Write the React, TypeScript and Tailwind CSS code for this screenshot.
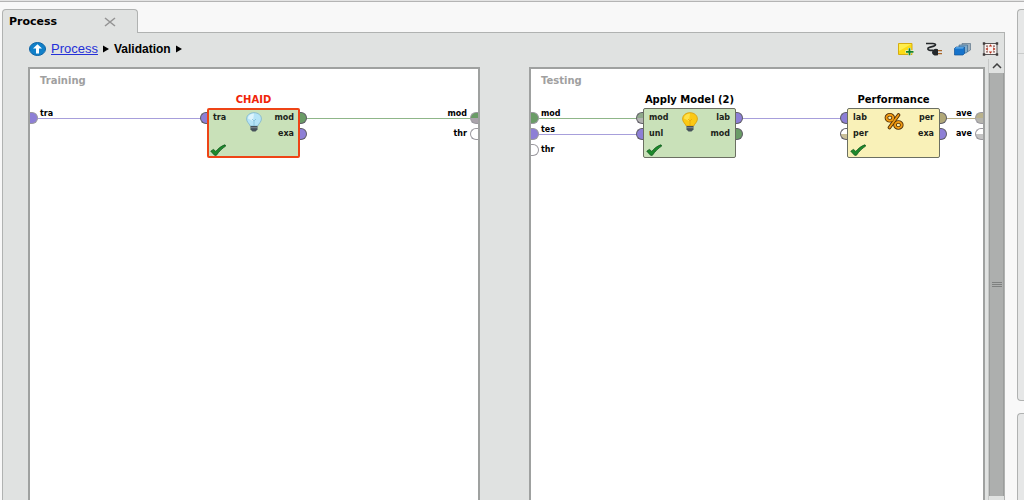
import { clsx } from "clsx";

type Side = "left" | "right";

interface PortData {
  label: string;
  color: string;
  wired?: boolean;
}

const colors = {
  violet: "bg-[#8d7fd6]",
  green: "bg-[#6a9c66]",
  tan: "bg-[#b1a878]",
  empty: "bg-white",
  greenGray: "bg-linear-to-b from-[#6a9c66] from-50% to-[#aaa3ab] to-50%",
  grayGreen: "bg-linear-to-b from-[#8fa98b] from-50% to-[#b3b3b3] to-50%",
  whiteTan: "bg-linear-to-b from-white from-50% to-[#c9bf98] to-50%",
  tanGray: "bg-linear-to-b from-[#b9b28c] from-50% to-[#b5b4ae] to-50%",
  whiteGray: "bg-linear-to-b from-white from-50% to-[#c4c4c4] to-50%",
};

const rows = ["top-[43px]", "top-[59px]", "top-[75px]"];
const nodeRows = ["top-1", "top-5"];

function Port({ bulge, color, className }: { bulge: Side; color: string; className: string }) {
  return (
    <span
      className={clsx(
        "absolute h-3 w-2 border",
        bulge === "left" ? "rounded-l-full border-r-0" : "rounded-r-full border-l-0",
        color,
        className
      )}
    />
  );
}

function Wire({ className }: { className: string }) {
  return <span className={clsx("absolute h-px", className)} />;
}

function EdgePorts({ side, ports }: { side: Side; ports: PortData[] }) {
  return (
    <>
      {ports.map((port, i) => (
        <div
          key={i}
          className={clsx(
            "absolute flex h-3 items-center text-[8px] leading-3 font-bold",
            side === "left" ? "left-0 pl-[10px]" : "right-0 pr-[11px]",
            rows[i]
          )}
        >
          <Port
            bulge={side === "left" ? "right" : "left"}
            color={port.color}
            className={clsx("border-[#9a989e]", side === "left" ? "left-0" : "right-0")}
          />
          <span className={port.wired ? "pb-2" : ""}>{port.label}</span>
        </div>
      ))}
    </>
  );
}

function Check() {
  return (
    <svg className="absolute bottom-[2px] left-[3px] h-3 w-4" viewBox="0 0 16 12">
      <path d="M.8 7.200 3.400 5.400 5.800 7.400C8.400 4.400 11.400 1.800 15 .8l.7 1.300C12 4.400 9 7.500 6.400 11.300H4.600z" fill="#1d8a2c" stroke="#0d5519" strokeWidth=".8" />
    </svg>
  );
}

function Bulb({ on }: { on?: boolean }) {
  return (
    <svg className="h-5 w-4" viewBox="0 0 16 20">
      <path
        d="M8 .7C3.700.7.6 3.400.6 6.900c0 3 2.400 4.300 3.700 7.100h7.400c1.300-2.800 3.700-4.100 3.700-7.100C15.400 3.400 12.300.7 8 .7Z"
        fill={on ? "#fbc914" : "#b5e4f7"}
        stroke={on ? "#d99a08" : "#7fb4cb"}
        strokeWidth=".8"
      />
      <path d="M8 1.500C4.500 1.600 2 3.800 2 6.500l5 2.500Z" fill={on ? "#ffe14a" : "#def4fc"} />
      <path d="m6 7 2 2 2-2M8 9v5" fill="none" stroke={on ? "#e6a50c" : "#83bdd8"} strokeWidth=".8" />
      <path d="M4.500 14h7v3.500L9.500 19.500h-3l-2-2z" fill="#46525b" />
      <path d="M4.500 15.700h7" stroke="#8f9aa0" strokeWidth=".8" />
    </svg>
  );
}

function Percent() {
  return (
    <svg className="h-[18px] w-5" viewBox="0 0 20 18">
      <g fill="none" stroke="#4d2c04" strokeWidth="3.600">
        <ellipse cx="5.800" cy="5.800" rx="3.400" ry="3" />
        <ellipse cx="14.400" cy="13" rx="3.400" ry="3" />
        <path d="M14.500 3 5.500 15.500" strokeLinecap="round" />
      </g>
      <g fill="none" stroke="#f09a13" strokeWidth="1.900">
        <ellipse cx="5.800" cy="5.800" rx="3.400" ry="3" />
        <ellipse cx="14.400" cy="13" rx="3.400" ry="3" />
        <path d="M14.500 3 5.500 15.500" strokeLinecap="round" />
      </g>
    </svg>
  );
}

interface OperatorProps {
  name: string;
  className: string;
  selected?: boolean;
  yellow?: boolean;
  inputs: PortData[];
  outputs: PortData[];
  icon: React.ReactNode;
}

function Operator({ name, className, selected, yellow, inputs, outputs, icon }: OperatorProps) {
  return (
    <div className={clsx("absolute top-[39px] h-[50px] w-[93px] text-[8px] leading-3 font-bold", className)}>
      <h3
        className={clsx(
          "absolute -top-[14px] left-1/2 -translate-x-1/2 text-[10px] leading-3 whitespace-nowrap",
          selected && "text-[#f02408]"
        )}
      >
        {name}
      </h3>
      {inputs.map((port, i) => (
        <Port key={i} bulge="left" color={port.color} className={clsx("-left-[7px] border-[#5f5d66]", nodeRows[i])} />
      ))}
      {outputs.map((port, i) => (
        <Port key={i} bulge="right" color={port.color} className={clsx("-right-[7px] border-[#5f5d66]", nodeRows[i])} />
      ))}
      <div
        className={clsx(
          "absolute inset-0 rounded-xs",
          yellow ? "bg-[#f9f1b8]" : "bg-[#c9e1b9]",
          selected ? "border-2 border-[#ee4416]" : "border border-[#6b6f62]"
        )}
      />
      <div className="relative flex h-full justify-between px-[6px] pt-1 text-[#1c1f1a]">
        <div className="flex flex-col gap-1">
          {inputs.map((port, i) => <span key={i}>{port.label}</span>)}
        </div>
        <div className="absolute top-1 left-1/2 -translate-x-1/2">{icon}</div>
        <div className="flex flex-col gap-1 text-right">
          {outputs.map((port, i) => <span key={i}>{port.label}</span>)}
        </div>
        <Check />
      </div>
    </div>
  );
}

function ArrowRight() {
  return (
    <svg className="h-2 w-[6px]" viewBox="0 0 6 8">
      <path d="M0 .5 6 4 0 7.500z" />
    </svg>
  );
}

function Toolbar() {
  return (
    <div className="flex gap-[11px]">
      <button aria-label="Add note">
        <svg className="h-[14px] w-4" viewBox="0 0 16 14">
          <path d="M.5 1.500h13.500v11H.5z" fill="#fbdc16" stroke="#d6ad10" />
          <path d="M1 2h12.500L1 9z" fill="#ffee4d" />
          <path d="M11.500 6v7.500M7.500 9.800h8.500" stroke="#e9f3e2" strokeWidth="3" />
          <path d="M11.500 6.300v7M8 9.800h7.500" stroke="#16832b" strokeWidth="1.800" />
        </svg>
      </button>
      <button aria-label="Auto wire">
        <svg className="h-[14px] w-[18px]" viewBox="0 0 18 14">
          <path d="M1 1.500h7c3 0 3.400 1.800.8 2.600L4.500 5.400C2 6.200 2.500 8.300 5 8.300h3" fill="none" stroke="#24282b" strokeWidth="1.700" />
          <path d="M7 10.500c0-2 2-3.700 4-3.700l2 .4v6l-2 .4C9 13.600 7 12.500 7 10.500Z" fill="#24282b" />
          <path d="M13 8.700h4M13 11.700h4" stroke="#a8662b" strokeWidth="1.300" />
        </svg>
      </button>
      <button aria-label="Operator order">
        <svg className="h-[14px] w-[17px]" viewBox="0 0 17 14">
          <path d="M8 1.500h8.500V8L14 9.500H8z" fill="#9fb0bd" stroke="#5d7589" strokeWidth=".7" />
          <path d="M5 3h8.500v7L12 11H5z" fill="#7eaacb" stroke="#3f6d92" strokeWidth=".7" />
          <path d="m.5 6.500 1.500-1.500h8.500v6.500L9 13H.5z" fill="#1673cb" stroke="#115396" strokeWidth=".7" />
          <path d="m1 6.500 1.200-1.200h7.800L9 6.500z" fill="#63b3f2" />
        </svg>
      </button>
      <button aria-label="Fit process">
        <svg className="h-[14px] w-[17px]" viewBox="0 0 17 14">
          <path d="M2 1.500h13v11H2z" fill="#faf3f1" stroke="#5b5656" />
          <path d="M.8.300h2.400v2.400H.8zM13.800.300h2.400v2.400h-2.400zM.8 11.300h2.400v2.400H.8zM13.800 11.300h2.400v2.400h-2.400z" fill="#403b3b" />
          <path d="m8.500 2.200 1.700 2.200H6.800zM8.500 11.800l1.700-2.200H6.800zM3.500 7l2.300-1.700v3.400zM13.500 7l-2.300-1.700v3.400z" fill="#b8301c" />
          <path d="M4.200 3.500h1.600v1.300H4.200zM11.200 3.500h1.600v1.300h-1.600zM4.200 9.200h1.600v1.300H4.200zM11.200 9.200h1.600v1.300h-1.600z" fill="#6b3a34" />
        </svg>
      </button>
    </div>
  );
}

const canvas = "relative border-2 border-b-0 border-[#9fa1a0] bg-white";
const caption = "absolute top-[6px] left-[10px] text-[10px] leading-3 font-bold text-[#a0a0a0]";

export default function App() {
  return (
    <div className="flex h-screen flex-col overflow-hidden bg-[#f8f8f8] font-['DejaVu_Sans',sans-serif] text-black">
      <div className="h-[2px] shrink-0 border-b border-[#b4b4b4] bg-[#e4e4e4]" />
      <div className="flex min-h-0 flex-1 gap-3 pt-[7px] pl-[2px]">
        <main className="flex min-w-0 flex-1 flex-col">
          <div className="relative z-10 -mb-px flex h-6 w-[136px] shrink-0 items-center justify-between rounded-t-sm border border-b-0 border-[#b0b2b1] bg-[#e0e2e1] pr-[21px] pl-[6px]">
            <h1 className="text-[11px] leading-4 font-bold">Process</h1>
            <button aria-label="Close tab">
              <svg className="h-[10px] w-3" viewBox="0 0 12 10">
                <path d="m1 1 10 8M11 1 1 9" stroke="#949494" strokeWidth="1.600" />
              </svg>
            </button>
          </div>
          <div className="flex min-h-0 flex-1 flex-col border border-b-0 border-[#b0b2b1] bg-[#e0e2e1]">
            <header className="flex h-[26px] shrink-0 items-end justify-between pr-[5px] pb-[3px] pl-[26px]">
              <nav className="flex h-[14px] items-center gap-[5px] font-['Liberation_Sans',sans-serif]">
                <button aria-label="Up one level">
                  <svg className="h-[14px] w-[17px]" viewBox="0 0 17 14">
                    <ellipse cx="8.500" cy="7" rx="8" ry="6.500" fill="#1180c9" stroke="#0b62a4" />
                    <path d="M8.500 2.300 13 6.600h-3V11.500H7V6.600H4z" fill="#fff" />
                  </svg>
                </button>
                <a href="#process" className="text-[13px] leading-4 text-[#2430d8] underline">Process</a>
                <ArrowRight />
                <span className="text-[12px] leading-4 font-bold">Validation</span>
                <ArrowRight />
              </nav>
              <Toolbar />
            </header>
            <div className="flex min-h-0 flex-1 gap-[3px] pl-[25px]">
              <div className="flex min-w-0 flex-1 gap-[49px] pt-2">
                <section className={clsx(canvas, "flex-[113]")}>
                  <h2 className={caption}>Training</h2>
                  <Wire className="top-[49px] left-2 w-[163px] bg-[#a79fdb]" />
                  <Wire className="top-[49px] right-2 left-[276px] bg-[#8fb689]" />
                  <EdgePorts side="left" ports={[{ label: "tra", color: colors.violet, wired: true }]} />
                  <EdgePorts
                    side="right"
                    ports={[
                      { label: "mod", color: colors.greenGray, wired: true },
                      { label: "thr", color: colors.empty },
                    ]}
                  />
                  <Operator
                    name="CHAID"
                    className="left-[177px]"
                    selected
                    inputs={[{ label: "tra", color: colors.violet }]}
                    outputs={[
                      { label: "mod", color: colors.green },
                      { label: "exa", color: colors.violet },
                    ]}
                    icon={<Bulb />}
                  />
                </section>
                <section className={clsx(canvas, "flex-[114]")}>
                  <h2 className={caption}>Testing</h2>
                  <Wire className="top-[49px] left-2 w-[98px] bg-[#8fb689]" />
                  <Wire className="top-[65px] left-2 w-[98px] bg-[#a79fdb]" />
                  <Wire className="top-[49px] left-[211px] w-[99px] bg-[#a79fdb]" />
                  <Wire className="top-[49px] right-2 left-[415px] bg-[#b8ad85]" />
                  <EdgePorts
                    side="left"
                    ports={[
                      { label: "mod", color: colors.green, wired: true },
                      { label: "tes", color: colors.violet, wired: true },
                      { label: "thr", color: colors.empty },
                    ]}
                  />
                  <EdgePorts
                    side="right"
                    ports={[
                      { label: "ave", color: colors.tanGray, wired: true },
                      { label: "ave", color: colors.whiteGray },
                    ]}
                  />
                  <Operator
                    name="Apply Model (2)"
                    className="left-28"
                    inputs={[
                      { label: "mod", color: colors.grayGreen },
                      { label: "unl", color: colors.violet },
                    ]}
                    outputs={[
                      { label: "lab", color: colors.violet },
                      { label: "mod", color: colors.green },
                    ]}
                    icon={<Bulb on />}
                  />
                  <Operator
                    name="Performance"
                    className="left-[316px]"
                    yellow
                    inputs={[
                      { label: "lab", color: colors.violet },
                      { label: "per", color: colors.whiteTan },
                    ]}
                    outputs={[
                      { label: "per", color: colors.tan },
                      { label: "exa", color: colors.violet },
                    ]}
                    icon={<Percent />}
                  />
                </section>
              </div>
              <div className="flex w-4 flex-col border-l border-[#c6c8c7] pb-1">
                <button aria-label="Scroll up" className="flex h-[14px] items-center justify-center">
                  <svg className="h-[6px] w-[10px]" viewBox="0 0 10 6">
                    <path d="m1 5 4-4 4 4" fill="none" stroke="#404040" strokeWidth="1.500" />
                  </svg>
                </button>
                <div className="flex flex-1 flex-col items-center justify-center gap-px border-x border-[#9b9d9c] bg-[#adafae]">
                  <span className="h-px w-[10px] bg-[#7f8180]" />
                  <span className="h-px w-[10px] bg-[#7f8180]" />
                  <span className="h-px w-[10px] bg-[#7f8180]" />
                </div>
              </div>
            </div>
          </div>
        </main>
        <aside className="flex w-[7px] shrink-0 flex-col gap-3">
          <div className="flex-[392] rounded-l-sm border border-r-0 border-[#b0b2b1] bg-[#e6e7e7]">
            <div className="h-11 border-b border-[#c9cbca]" />
          </div>
          <div className="flex-[87] rounded-tl-sm border border-r-0 border-b-0 border-[#b0b2b1] bg-[#e6e7e7]" />
        </aside>
      </div>
    </div>
  );
}
